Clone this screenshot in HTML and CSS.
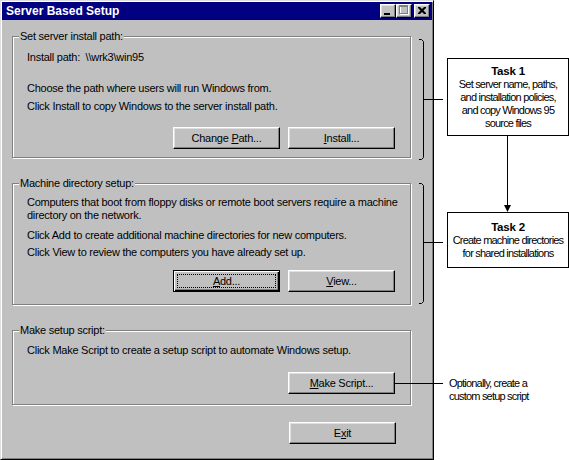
FILE: index.html
```html
<!DOCTYPE html>
<html>
<head>
<meta charset="utf-8">
<title>Server Based Setup</title>
<link rel="stylesheet" href="styles.css">
</head>
<body>
<div class="page">
  <div class="window">
    <div class="titlebar">
      <span class="title">Server Based Setup</span>
      <div class="controls">
        <span class="tbtn"><svg width="14" height="12" viewBox="0 0 14 12"><rect x="3" y="8" width="6" height="2" fill="#000"/></svg></span>
        <span class="tbtn"><svg width="14" height="12" viewBox="0 0 14 12"><rect x="3.5" y="1.5" width="8" height="8" fill="none" stroke="#fff"/><rect x="2.5" y="0.5" width="8" height="8" fill="none" stroke="#808080"/><rect x="2" y="0" width="9" height="2" fill="#808080"/></svg></span>
        <span class="tbtn close"><svg width="14" height="12" viewBox="0 0 14 12"><path d="M3 2h2l2 2 2-2h2v1l-2.5 2.5L11 8v1H9L7 7 5 9H3V8l2.5-2.5L3 3z" fill="#000"/></svg></span>
      </div>
    </div>
    <div class="content">
      <div class="group g1">
        <div class="legend">Set server install path:</div>
        <p class="t-install">Install path:&nbsp; \\wrk3\win95</p>
        <p class="t-choose">Choose the path where users will run Windows from.</p>
        <p class="t-click">Click Install to copy Windows to the server install path.</p>
        <div class="btnrow r1">
          <button class="btn">Change <u>P</u>ath...</button>
          <button class="btn"><u>I</u>nstall...</button>
        </div>
      </div>
      <div class="group g2">
        <div class="legend">Machine directory setup:</div>
        <p class="t-computers">Computers that boot from floppy disks or remote boot servers require a machine<br>directory on the network.</p>
        <p class="t-add">Click Add to create additional machine directories for new computers.</p>
        <p class="t-view">Click View to review the computers you have already set up.</p>
        <div class="btnrow r2">
          <button class="btn default"><u>A</u>dd...</button>
          <button class="btn"><u>V</u>iew...</button>
        </div>
      </div>
      <div class="group g3">
        <div class="legend">Make setup script:</div>
        <p class="t-make">Click Make Script to create a setup script to automate Windows setup.</p>
        <div class="btnrow r3">
          <button class="btn"><u>M</u>ake Script...</button>
        </div>
      </div>
      <div class="btnrow exitrow">
        <button class="btn">E<u>x</u>it</button>
      </div>
    </div>
  </div>
  <div class="notes">
    <div class="box box1">
      <b>Task 1</b>
      <span>Set server name, paths,</span>
      <span>and installation policies,</span>
      <span>and copy Windows 95</span>
      <span>source files</span>
    </div>
    <div class="box box2">
      <b>Task 2</b>
      <span>Create machine directories</span>
      <span>for shared installations</span>
    </div>
    <div class="opt">Optionally, create a<br>custom setup script</div>
  </div>
  <svg class="wires" width="569" height="460" viewBox="0 0 569 460">
    <g fill="none" stroke="#000" stroke-width="1">
      <path d="M419 39.5H421.5L423.5 41.5V157.5L421.5 159.5H419"/>
      <path d="M424 99.5H443"/>
      <path d="M419 183.5H421.5L423.5 185.5V301.5L421.5 303.5H419"/>
      <path d="M424 242.5H443"/>
      <path d="M507.5 136V206"/>
      <path d="M395 383.5H443"/>
    </g>
    <polygon points="504,205 511,205 507.5,212" fill="#000"/>
  </svg>
</div>
</body>
</html>
```
FILE: styles.css
```css
html, body {
  margin: 0;
  padding: 0;
  background: #fff;
}
body {
  font-family: "Liberation Sans", Arial, sans-serif;
  font-size: 11px;
  color: #000;
}
.page {
  position: relative;
  display: flex;
  width: 569px;
  height: 460px;
}
.window {
  width: 434px;
  height: 460px;
  box-sizing: border-box;
  flex: none;
  background: #c0c0c0;
  border: 1px solid;
  border-color: #dfdfdf #000 #000 #dfdfdf;
  padding: 1px;
  box-shadow: inset 1px 1px #fff, inset -1px -1px #808080;
}
.titlebar {
  height: 18px;
  background: #000080;
  display: flex;
  align-items: center;
  justify-content: space-between;
  padding: 0 2px 0 4px;
}
.title {
  color: #fff;
  font-weight: bold;
  font-size: 12px;
  line-height: 18px;
}
.controls {
  display: flex;
  align-items: center;
}
.tbtn {
  width: 16px;
  height: 14px;
  box-sizing: border-box;
  background: #c0c0c0;
  border: 1px solid;
  border-color: #fff #000 #000 #fff;
  box-shadow: inset -1px -1px #808080, inset 1px 1px #dfdfdf;
  display: flex;
  align-items: center;
  justify-content: center;
}
.tbtn svg { display: block; }
.tbtn.close { margin-left: 2px; }
.content {
  padding: 0 20px 0 10px;
  letter-spacing: -0.25px;
}
.group {
  width: 399px;
  box-sizing: border-box;
  border: 1px solid #808080;
  box-shadow: 1px 1px 0 #fff, inset 1px 1px 0 #fff;
  padding: 0 15px 0 14px;
}
.legend {
  display: table;
  margin: -7px 0 0 -8px;
  padding: 0 1px;
  background: #c0c0c0;
  line-height: 13px;
}
.group p {
  margin: 0;
  line-height: 13px;
  white-space: nowrap;
}
.g1 { margin-top: 16px; padding-bottom: 8px; }
.t-install { margin-top: 8px !important; }
.t-choose { margin-top: 18px !important; }
.t-click { margin-top: 5px !important; }
.r1 { margin-top: 14px; }

.g2 { margin-top: 25px; padding-bottom: 12px; }
.t-computers { margin-top: 6px !important; }
.t-add { margin-top: 7px !important; }
.t-view { margin-top: 4px !important; }
.r2 { margin-top: 11px; }

.g3 { margin-top: 25px; padding-bottom: 10px; }
.t-make { margin-top: 7px !important; }
.r3 { margin-top: 15px; }

.btnrow {
  display: flex;
  justify-content: flex-end;
  gap: 8px;
}
.exitrow {
  width: 399px;
  box-sizing: border-box;
  padding-right: 15px;
  margin-top: 17px;
}
.btn {
  width: 107px;
  height: 22px;
  box-sizing: border-box;
  background: #c0c0c0;
  border: 1px solid;
  border-color: #fff #000 #000 #fff;
  box-shadow: inset -1px -1px #808080, inset 1px 1px #dfdfdf;
  font: inherit;
  letter-spacing: inherit;
  color: #000;
  padding: 0;
  margin: 0;
  line-height: 13px;
}
.btn.default {
  border-color: #000;
  box-shadow: inset 1px 1px #fff, inset -1px -1px #000, inset -2px -2px #808080;
  outline: 1px dotted #000;
  outline-offset: -5px;
}
.notes {
  position: relative;
  flex: 1;
  font-family: "Liberation Sans", Arial, sans-serif;
  font-size: 11px;
  letter-spacing: -0.8px;
  line-height: 13px;
}
.box {
  position: absolute;
  left: 13px;
  width: 122px;
  box-sizing: border-box;
  border: 1px solid #000;
  background: #fff;
  text-align: center;
  white-space: nowrap;
  display: flex;
  flex-direction: column;
  justify-content: center;
}
.box b {
  font-size: 11.5px;
  letter-spacing: -0.2px;
}
.box1 { top: 58px; height: 78px; }
.box2 { top: 212px; height: 56px; }
.opt {
  position: absolute;
  left: 15px;
  top: 377px;
}
.wires {
  position: absolute;
  left: 0;
  top: 0;
  pointer-events: none;
}
```
